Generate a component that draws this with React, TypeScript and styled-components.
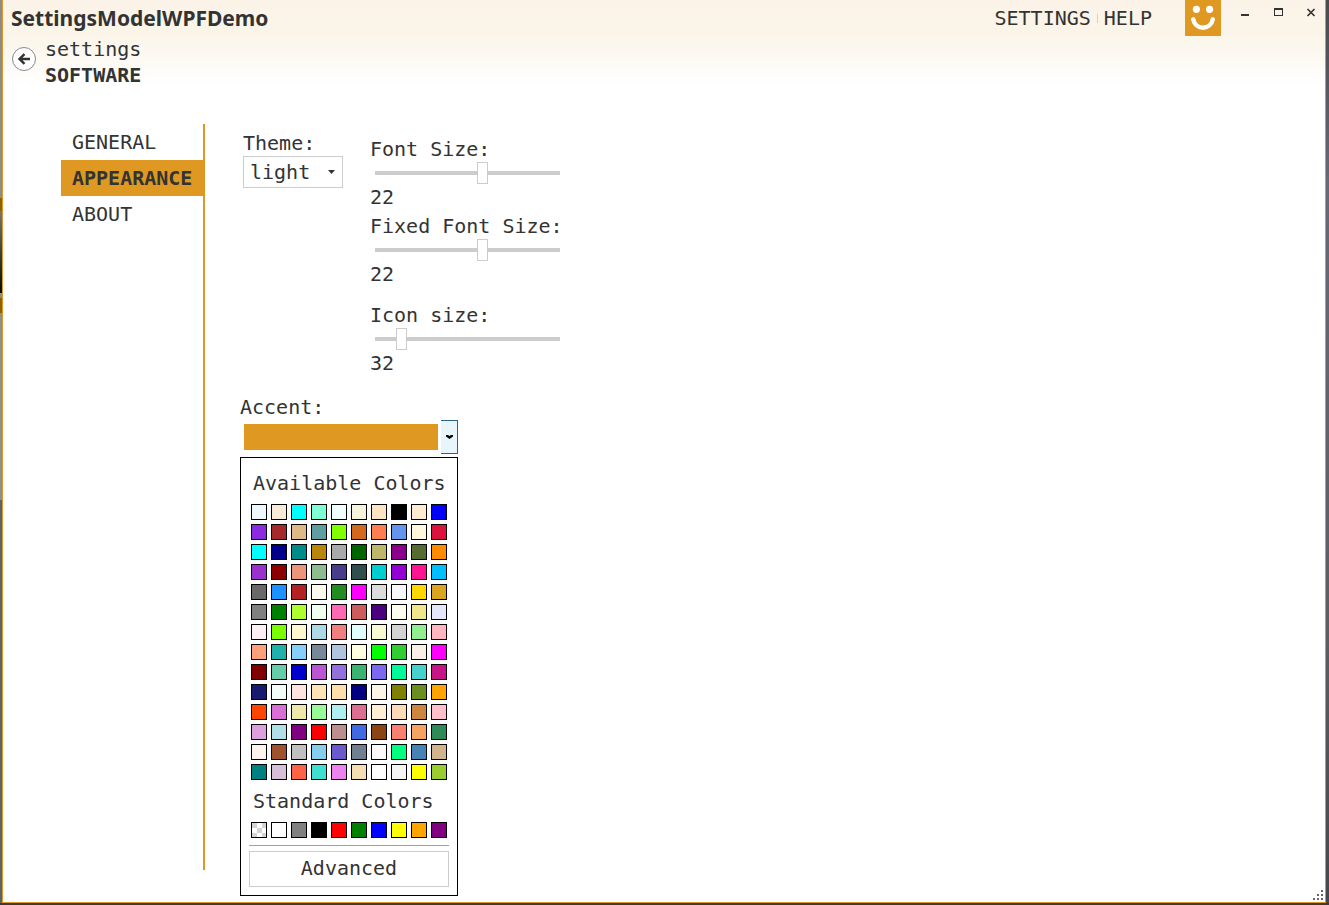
import React, { useState } from "react";
import styled, { createGlobalStyle, css } from "styled-components";

const accent = "#df9922";
const ink = "#333333";
const line = "#cccccc";
const mono = `"DejaVu Sans Mono", "Liberation Mono", monospace`;

const GlobalStyle = createGlobalStyle`
  *, *::before, *::after { box-sizing: border-box; }
  body { margin: 0; }
  button, input, select { font: inherit; color: inherit; }
`;

const Desktop = styled.div`
  display: flex;
  min-height: 100vh;
  padding: 0 3px 2px 2px;
  color: ${ink};
  font: 20px/26px ${mono};
  background:
    linear-gradient(#3a3a3a, #3a3a3a) bottom / 100% 2px no-repeat,
    linear-gradient(#4a4a4f, #666a75 20%, #5c5e63 70%, #45474c) right / 3px 100% no-repeat,
    linear-gradient(
      #8c8c90 0 198px, #8f5f0a 198px 211px, #77777b 211px, #0a0a0a 293px,
      #8c8c90 293px 298px, #8f5f0a 298px 313px, #8e8e94 313px 500px, #5c6070 500px
    ) left / 2px 100% no-repeat;
`;

const Window = styled.div`
  position: relative;
  flex: 1;
  display: flex;
  flex-direction: column;
  border: solid ${accent};
  border-width: 0 1px 1px;
  background: #ffffff linear-gradient(#fbf3e7, #fbf5e9 36px, #ffffff 86px) no-repeat;
`;

const TitleBar = styled.header`
  display: flex;
  align-items: flex-start;
  height: 36px;
`;

const Title = styled.h1`
  flex: 1;
  margin: 0;
  padding-left: 8px;
  font: bold 21px/36px "Noto Sans", "Open Sans", sans-serif;
`;

const Commands = styled.nav`
  display: flex;
  align-items: center;
  height: 36px;
  margin-right: 33px;
`;

const Command = styled.a`
  color: inherit;
  text-decoration: none;

  & + & {
    display: flex;
    align-items: center;
    margin-left: 6px;
  }

  & + &::before {
    content: "";
    width: 1px;
    height: 9px;
    margin-right: 6px;
    background: #d8d4cc;
  }
`;

const Logo = styled.div`
  width: 36px;
  height: 36px;
  margin-right: 10px;
  background: ${accent};
`;

const WindowButtons = styled.div`
  display: flex;
  gap: 5px;
`;

const WindowButton = styled.button`
  display: grid;
  place-items: center;
  width: 28px;
  height: 24px;
  padding: 0;
  border: 0;
  background: none;
`;

const PageHeader = styled.div`
  display: flex;
  align-items: center;
  gap: 9px;
  padding-left: 9px;
`;

const BackButton = styled.button`
  display: grid;
  place-items: center;
  width: 24px;
  height: 24px;
  margin-bottom: 6px;
  padding: 0;
  border: 1px solid #8a8a8a;
  border-radius: 50%;
  background: #ffffff;
`;

const Crumb = styled.div<{ $current?: boolean }>`
  font-weight: ${(p) => (p.$current ? "bold" : "normal")};
`;

const Body = styled.div`
  flex: 1;
  display: flex;
  padding: 36px 0 32px 58px;
`;

const SideNav = styled.nav`
  width: 144px;
  border-right: 2px solid ${accent};
`;

const SideLink = styled.a<{ $active?: boolean }>`
  display: block;
  padding-left: 11px;
  color: inherit;
  line-height: 36px;
  text-decoration: none;
  ${(p) =>
    p.$active &&
    css`
      background: ${accent};
      font-weight: bold;
    `}
`;

const Pane = styled.main`
  flex: 1;
  padding: 0 35px;
`;

const Options = styled.div`
  display: flex;
  align-items: flex-start;
  gap: 27px;
`;

const ThemeField = styled.div`
  display: flex;
  flex-direction: column;
  width: 100px;
  margin-left: 3px;
  padding-top: 6px;
`;

const SelectBox = styled.div`
  display: grid;
  align-items: center;

  & > * { grid-area: 1 / 1; }
  & > svg {
    justify-self: end;
    margin-right: 8px;
    pointer-events: none;
  }
`;

const Select = styled.select`
  appearance: none;
  width: 100%;
  height: 32px;
  padding: 0 6px;
  border: 1px solid ${line};
  border-radius: 0;
  background: #ffffff;
`;

const SliderList = styled.div`
  display: flex;
  flex-direction: column;
  gap: 3px;
  padding-top: 12px;
`;

const SliderField = styled.div<{ $separate?: boolean }>`
  display: flex;
  flex-direction: column;
  margin-top: ${(p) => (p.$separate ? "12px" : "0")};
`;

const Slider = styled.input`
  appearance: none;
  width: 185px;
  height: 22px;
  margin: 0 0 0 5px;
  background: linear-gradient(${line}, ${line}) center / 100% 4px no-repeat;

  &::-webkit-slider-thumb {
    appearance: none;
    width: 11px;
    height: 22px;
    border: 1px solid ${line};
    border-radius: 0;
    background: #ffffff;
  }
`;

const AccentField = styled.div`
  position: relative;
  width: 218px;
  margin-top: 18px;
`;

const Picker = styled.div`
  display: flex;
  height: 34px;
`;

const PickerColor = styled.div`
  flex: 1;
  margin: 4px 3px 4px 4px;
  background: ${accent};
`;

const PickerButton = styled.button`
  display: grid;
  place-items: center;
  width: 17px;
  padding: 0;
  border: solid #2c628b;
  border-width: 1px 1px 1px 0;
  background: #e9f5fd;
`;

const Popup = styled.div`
  position: absolute;
  top: 100%;
  left: 0;
  width: 100%;
  margin-top: 3px;
  padding: 12px 8px 8px;
  border: 1px solid #000000;
  background: #ffffff;
`;

const PopupTitle = styled.h2`
  margin: 0 0 8px;
  padding-left: 4px;
  font: inherit;
`;

const Swatches = styled.div`
  display: grid;
  grid-template-columns: repeat(10, 16px);
  gap: 4px;
  padding-left: 2px;

  & + ${PopupTitle} {
    margin-top: 8px;
  }
`;

const Swatch = styled.button<{ $color: string }>`
  height: 16px;
  padding: 0;
  border: 1px solid #000000;
  background: ${(p) =>
    p.$color === "Transparent"
      ? "repeating-conic-gradient(#ffffff 0 25%, #d3d3d3 0 50%) 0 0 / 10px 10px"
      : p.$color};
`;

const Divider = styled.hr`
  margin: 7px 0 5px;
  border: 0;
  border-top: 1px solid #a0a0a0;
`;

const AdvancedButton = styled.button`
  display: block;
  width: 100%;
  height: 36px;
  padding: 0 0 2px;
  border: 1px solid ${line};
  background: #ffffff;
`;

const Grip = styled.svg`
  position: absolute;
  right: 2px;
  bottom: 2px;
`;

const availableColors = `AliceBlue AntiqueWhite Aqua Aquamarine Azure Beige Bisque Black BlanchedAlmond Blue
BlueViolet Brown BurlyWood CadetBlue Chartreuse Chocolate Coral CornflowerBlue Cornsilk Crimson
Cyan DarkBlue DarkCyan DarkGoldenrod DarkGray DarkGreen DarkKhaki DarkMagenta DarkOliveGreen DarkOrange
DarkOrchid DarkRed DarkSalmon DarkSeaGreen DarkSlateBlue DarkSlateGray DarkTurquoise DarkViolet DeepPink DeepSkyBlue
DimGray DodgerBlue Firebrick FloralWhite ForestGreen Fuchsia Gainsboro GhostWhite Gold Goldenrod
Gray Green GreenYellow Honeydew HotPink IndianRed Indigo Ivory Khaki Lavender
LavenderBlush LawnGreen LemonChiffon LightBlue LightCoral LightCyan LightGoldenrodYellow LightGray LightGreen LightPink
LightSalmon LightSeaGreen LightSkyBlue LightSlateGray LightSteelBlue LightYellow Lime LimeGreen Linen Magenta
Maroon MediumAquamarine MediumBlue MediumOrchid MediumPurple MediumSeaGreen MediumSlateBlue MediumSpringGreen MediumTurquoise MediumVioletRed
MidnightBlue MintCream MistyRose Moccasin NavajoWhite Navy OldLace Olive OliveDrab Orange
OrangeRed Orchid PaleGoldenrod PaleGreen PaleTurquoise PaleVioletRed PapayaWhip PeachPuff Peru Pink
Plum PowderBlue Purple Red RosyBrown RoyalBlue SaddleBrown Salmon SandyBrown SeaGreen
SeaShell Sienna Silver SkyBlue SlateBlue SlateGray Snow SpringGreen SteelBlue Tan
Teal Thistle Tomato Turquoise Violet Wheat White WhiteSmoke Yellow YellowGreen`.split(/\s+/);

const standardColors = ["Transparent", "White", "Gray", "Black", "Red", "Green", "Blue", "Yellow", "Orange", "Purple"];

function ColorGrid({ colors }: { colors: string[] }) {
  return (
    <Swatches>
      {colors.map((c) => (
        <Swatch key={c} type="button" $color={c} aria-label={c} />
      ))}
    </Swatches>
  );
}

type SizeSliderProps = {
  id: string;
  label: string;
  min: number;
  max: number;
  initial: number;
  separate?: boolean;
};

function SizeSlider({ id, label, min, max, initial, separate }: SizeSliderProps) {
  const [value, setValue] = useState(initial);
  return (
    <SliderField $separate={separate}>
      <label htmlFor={id}>{label}</label>
      <Slider id={id} type="range" min={min} max={max} value={value} onChange={(e) => setValue(Number(e.target.value))} />
      <output htmlFor={id}>{value}</output>
    </SliderField>
  );
}

export default function App() {
  const [open, setOpen] = useState(true);
  return (
    <>
      <GlobalStyle />
      <Desktop>
        <Window>
          <TitleBar>
            <Title>SettingsModelWPFDemo</Title>
            <Commands aria-label="Commands">
              <Command href="#settings">SETTINGS</Command>
              <Command href="#help">HELP</Command>
            </Commands>
            <Logo>
              <svg width="36" height="36" viewBox="0 0 36 36" aria-hidden="true">
                <circle cx="11.4" cy="9.3" r="3.6" fill="#fff" />
                <circle cx="24.6" cy="9.3" r="3.6" fill="#fff" />
                <path d="M8.200 19.300C9.200 24.300 13.200 27.800 18 27.800s8.800-3.500 9.800-8.500" fill="none" stroke="#fff" strokeWidth="4.4" strokeLinecap="round" />
              </svg>
            </Logo>
            <WindowButtons>
              <WindowButton type="button" aria-label="Minimize">
                <svg width="10" height="10" viewBox="0 0 10 10"><path d="M1 7h8v2H1z" fill={ink} /></svg>
              </WindowButton>
              <WindowButton type="button" aria-label="Maximize">
                <svg width="10" height="10" viewBox="0 0 10 10"><path d="M1 1h9v8H1zM2 3v5h7V3z" fill={ink} fillRule="evenodd" /></svg>
              </WindowButton>
              <WindowButton type="button" aria-label="Close">
                <svg width="10" height="10" viewBox="0 0 10 10"><path d="M1.500 2l7 7m0-7l-7 7" stroke={ink} strokeWidth="1.700" /></svg>
              </WindowButton>
            </WindowButtons>
          </TitleBar>

          <PageHeader>
            <BackButton type="button" aria-label="Back">
              <svg width="14" height="12" viewBox="0 0 14 12" aria-hidden="true">
                <path d="M13 6H3M7.500 1.200L2.500 6l5 4.800" fill="none" stroke={ink} strokeWidth="2.400" />
              </svg>
            </BackButton>
            <div>
              <Crumb>settings</Crumb>
              <Crumb $current>SOFTWARE</Crumb>
            </div>
          </PageHeader>

          <Body>
            <SideNav aria-label="Software settings">
              <SideLink href="#general">GENERAL</SideLink>
              <SideLink href="#appearance" $active>APPEARANCE</SideLink>
              <SideLink href="#about">ABOUT</SideLink>
            </SideNav>
            <Pane>
              <Options>
                <ThemeField>
                  <label htmlFor="theme">Theme:</label>
                  <SelectBox>
                    <Select id="theme" defaultValue="light">
                      <option>light</option>
                      <option>dark</option>
                    </Select>
                    <svg width="7" height="4" viewBox="0 0 7 4" aria-hidden="true"><path d="M0 0h7L3.500 4z" fill={ink} /></svg>
                  </SelectBox>
                </ThemeField>
                <SliderList>
                  <SizeSlider id="font-size" label="Font Size:" min={5} max={34} initial={22} />
                  <SizeSlider id="fixed-font-size" label="Fixed Font Size:" min={5} max={34} initial={22} />
                  <SizeSlider id="icon-size" label="Icon size:" min={16} max={148} initial={32} separate />
                </SliderList>
              </Options>
              <AccentField>
                <div id="accent-label">Accent:</div>
                <Picker>
                  <PickerColor />
                  <PickerButton type="button" aria-labelledby="accent-label" aria-expanded={open} onClick={() => setOpen(!open)}>
                    <svg width="7" height="4" viewBox="0 0 7 4" aria-hidden="true"><path d="M0 0h2l1.500 1L5 0h2v1.500L3.500 4 0 1.500z" fill="#000" /></svg>
                  </PickerButton>
                </Picker>
                {open && (
                  <Popup>
                    <PopupTitle>Available Colors</PopupTitle>
                    <ColorGrid colors={availableColors} />
                    <PopupTitle>Standard Colors</PopupTitle>
                    <ColorGrid colors={standardColors} />
                    <Divider />
                    <AdvancedButton type="button">Advanced</AdvancedButton>
                  </Popup>
                )}
              </AccentField>
            </Pane>
          </Body>

          <Grip width="10" height="10" viewBox="0 0 10 10" aria-hidden="true">
            <path d="M8 0h2v2H8zM4 4h2v2H4zM8 4h2v2H8zM0 8h2v2H0zM4 8h2v2H4zM8 8h2v2H8z" fill="#666" />
          </Grip>
        </Window>
      </Desktop>
    </>
  );
}
